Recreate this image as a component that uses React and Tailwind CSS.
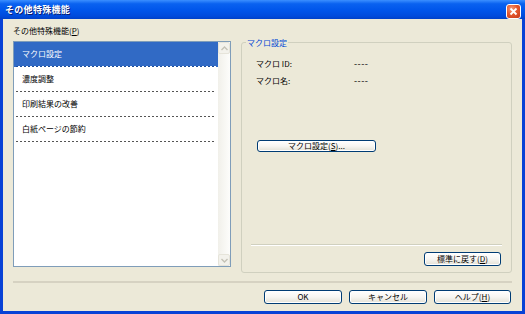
import React from "react";

const FONT = { fontFamily: '"Noto Sans CJK JP", "Noto Sans", sans-serif' };

const items = ["マクロ設定", "濃度調整", "印刷結果の改善", "白紙ページの節約"];

const XpButton = ({ children, className = "" }) => (
  <button
    className={
      "flex items-center justify-center rounded-[3px] border border-[#003c74] bg-gradient-to-b from-white via-[#f7f6f2] to-[#e3e1d6] text-[8px] leading-none text-black shadow-[inset_0_0_0_1px_#fff] " +
      className
    }
  >
    {children}
  </button>
);

const Chevron = ({ up }) => (
  <svg width="7" height="5" viewBox="0 0 7 5">
    <path
      d={up ? "M0.5 4 L3.5 1 L6.5 4" : "M0.5 1 L3.5 4 L6.5 1"}
      fill="none"
      stroke="#c4c2b6"
      strokeWidth="1.4"
    />
  </svg>
);

const App = () => {
  return (
    <div
      className="flex h-[314px] w-[525px] flex-col overflow-hidden bg-[#0842d6] text-black"
      style={FONT}
    >
      {/* タイトルバー */}
      <div className="flex h-[19px] shrink-0 items-center justify-between bg-[linear-gradient(to_bottom,#3b8fff_0%,#0a62f0_20%,#0055ea_55%,#004bdc_85%,#0041c8_100%)] pl-[5px] pr-[4px]">
        <span className="text-[9px] font-bold leading-none tracking-[0.3px] text-white [text-shadow:1px_1px_0_#0a1e6e]">
          その他特殊機能
        </span>
        <div className="mt-[3px] flex h-[15px] w-[15px] items-center justify-center rounded-[3px] border border-white bg-[radial-gradient(circle_at_35%_30%,#f59a7a_0%,#e4582e_45%,#c6391a_100%)]">
          <svg width="9" height="9" viewBox="0 0 9 9">
            <path d="M1.5 1.5 L7.5 7.5 M7.5 1.5 L1.5 7.5" stroke="#fff" strokeWidth="1.8" />
          </svg>
        </div>
      </div>

      {/* 本体 */}
      <div className="mx-[3px] mb-[3px] flex flex-1 flex-col bg-[#ece9d8] px-[10px] pt-[5px]">
        <div className="h-[13px] text-[8px] leading-[13px]">
          その他特殊機能(<span className="underline">P</span>)
        </div>

        <div className="mt-[4px] flex gap-[10px]">
          {/* リストボックス */}
          <div className="flex h-[226px] w-[218px] border border-[#7f9db9] bg-white">
            <div className="flex flex-1 flex-col">
              {items.map((label, i) => {
                const selected = i === 0;
                return (
                  <div
                    key={label}
                    className={
                      "flex h-[25px] flex-col " +
                      (selected ? "bg-[#316ac5] text-white" : "text-black")
                    }
                  >
                    <div className="flex flex-1 items-center pl-[8px] text-[8px] leading-none">
                      {label}
                    </div>
                    <div
                      className={
                        "mx-[2px] h-px bg-[length:4px_1px] " +
                        (selected
                          ? "bg-[linear-gradient(to_right,#1d4f9e_50%,#ffffff_50%)]"
                          : "bg-[linear-gradient(to_right,#555555_50%,transparent_50%)]")
                      }
                    />
                  </div>
                );
              })}
            </div>
            {/* スクロールバー */}
            <div className="flex w-[12px] flex-col justify-between bg-gradient-to-r from-[#f1f0ea] to-[#fdfdfb]">
              <div className="flex h-[12px] items-center justify-center rounded-[2px] border border-[#e6e4da] bg-[#f3f2ec]">
                <Chevron up />
              </div>
              <div className="flex h-[12px] items-center justify-center rounded-[2px] border border-[#e6e4da] bg-[#f3f2ec]">
                <Chevron />
              </div>
            </div>
          </div>

          {/* グループボックス */}
          <div className="relative mt-[1px] flex h-[231px] w-[271px] flex-col rounded-[3px] border border-[#d0d0bf] px-[9px] pt-[14px] pb-[6px]">
            <span className="absolute -top-[7px] left-[4px] bg-[#ece9d8] px-[1px] text-[8px] leading-[13px] text-[#0046d5]">
              マクロ設定
            </span>
            <div className="flex h-[13px] pl-[5px] text-[8px] leading-[13px]">
              <span className="w-[98px]">マクロ ID:</span>
              <span className="text-[9px] tracking-[0.5px]">----</span>
            </div>
            <div className="mt-[4px] flex h-[13px] pl-[5px] text-[8px] leading-[13px]">
              <span className="w-[98px]">マクロ名:</span>
              <span className="text-[9px] tracking-[0.5px]">----</span>
            </div>
            <XpButton className="mt-[53px] ml-[6px] h-[12px] w-[119px] border-[#2e5aa8]">
              マクロ設定(<span className="underline">S</span>)...
            </XpButton>
            <div className="flex-1" />
            <div className="h-px bg-[#d0d0bf] shadow-[0_1px_0_#fff]" />
            <div className="mt-[7px] flex justify-end pr-[1px]">
              <XpButton className="h-[14px] w-[77px]">
                標準に戻す(<span className="underline">D</span>)
              </XpButton>
            </div>
          </div>
        </div>

        {/* 区切り線 */}
        <div className="mt-[8px] h-[2px] bg-[#d6d2c2]" />

        {/* ボタン */}
        <div className="mt-[7px] flex justify-end gap-[7px] pr-[1px]">
          <XpButton className="h-[14px] w-[78px]">OK</XpButton>
          <XpButton className="h-[14px] w-[78px]">キャンセル</XpButton>
          <XpButton className="h-[14px] w-[77px]">
            ヘルプ(<span className="underline">H</span>)
          </XpButton>
        </div>
      </div>
    </div>
  );
};

export default App;
